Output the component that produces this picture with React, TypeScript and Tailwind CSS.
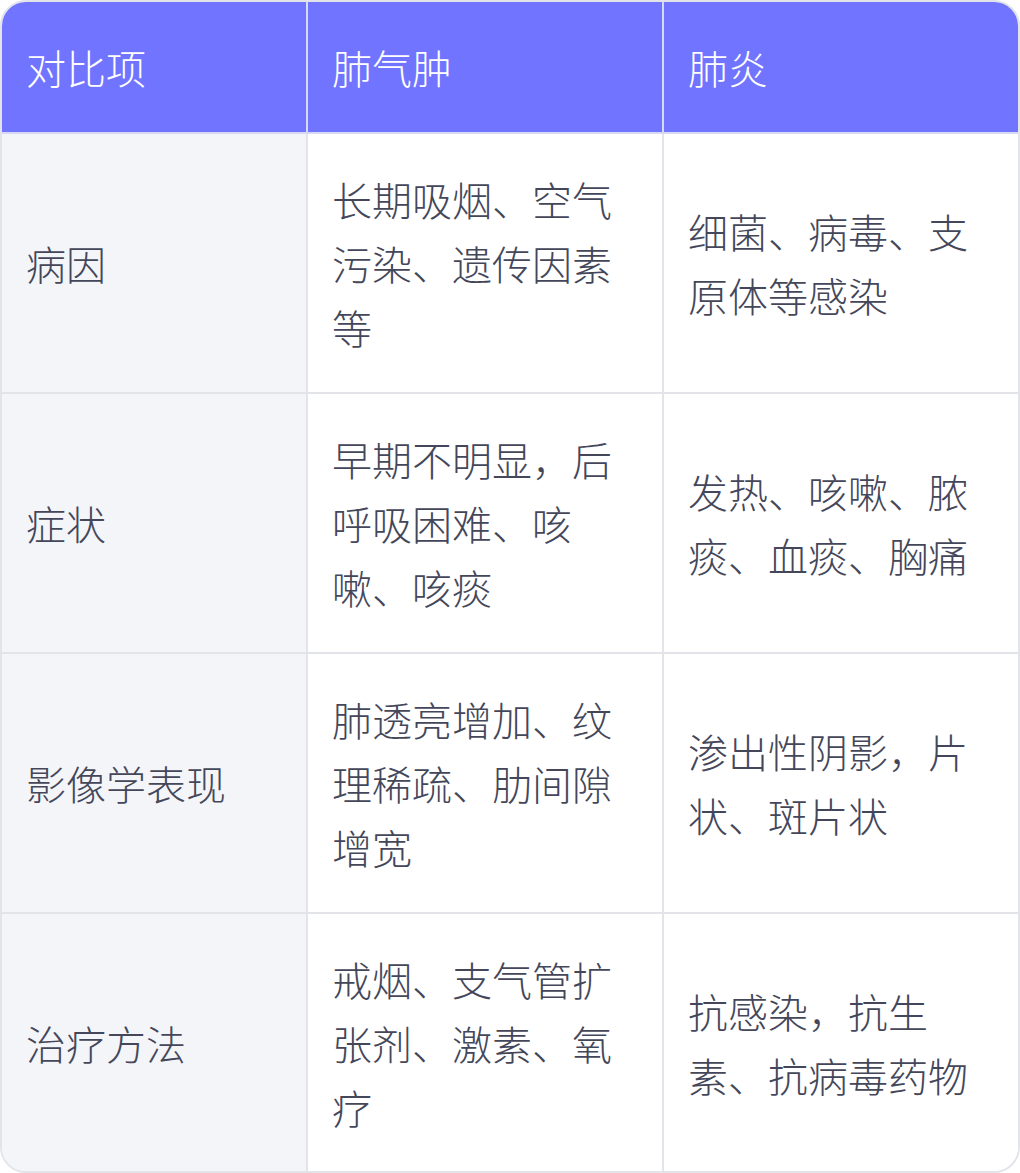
import React from "react";

const rows: [string, string, string][] = [
  ["病因", "长期吸烟、空气污染、遗传因素等", "细菌、病毒、支原体等感染"],
  ["症状", "早期不明显，后呼吸困难、咳嗽、咳痰", "发热、咳嗽、脓痰、血痰、胸痛"],
  ["影像学表现", "肺透亮增加、纹理稀疏、肋间隙增宽", "渗出性阴影，片状、斑片状"],
  ["治疗方法", "戒烟、支气管扩张剂、激素、氧疗", "抗感染，抗生素、抗病毒药物"],
];

export default function App() {
  return (
    <div
      className="w-[1020px] bg-white font-light"
      style={{ fontFamily: '"Noto Sans CJK SC", "Noto Sans", sans-serif' }}
    >
      <div className="w-[1020px] border-2 border-[#e3e4ea] rounded-[26px] overflow-hidden text-[40px] leading-[64px]">
        <div className="flex h-[132px] bg-[#7074ff] text-white border-b-2 border-[#d7d9f3]">
          <div className="w-[306px] shrink-0 border-r-2 border-[#d7d9f3] px-6 flex items-center">对比项</div>
          <div className="w-[356px] shrink-0 border-r-2 border-[#d7d9f3] px-6 flex items-center">肺气肿</div>
          <div className="flex-1 px-6 flex items-center">肺炎</div>
        </div>
        {rows.map((r, i) => (
          <div
            key={i}
            className={
              i < rows.length - 1
                ? "flex h-[260px] border-b-2 border-[#e3e4ea] text-[#44475a]"
                : "flex h-[257px] text-[#44475a]"
            }
          >
            <div className="w-[306px] shrink-0 border-r-2 border-[#e3e4ea] bg-[#f4f5f9] px-6 flex items-center">
              {r[0]}
            </div>
            <div className="w-[356px] shrink-0 border-r-2 border-[#e3e4ea] bg-white px-6 flex items-center">
              <div>{r[1]}</div>
            </div>
            <div className="flex-1 bg-white px-6 flex items-center">
              <div>{r[2]}</div>
            </div>
          </div>
        ))}
      </div>
    </div>
  );
}
